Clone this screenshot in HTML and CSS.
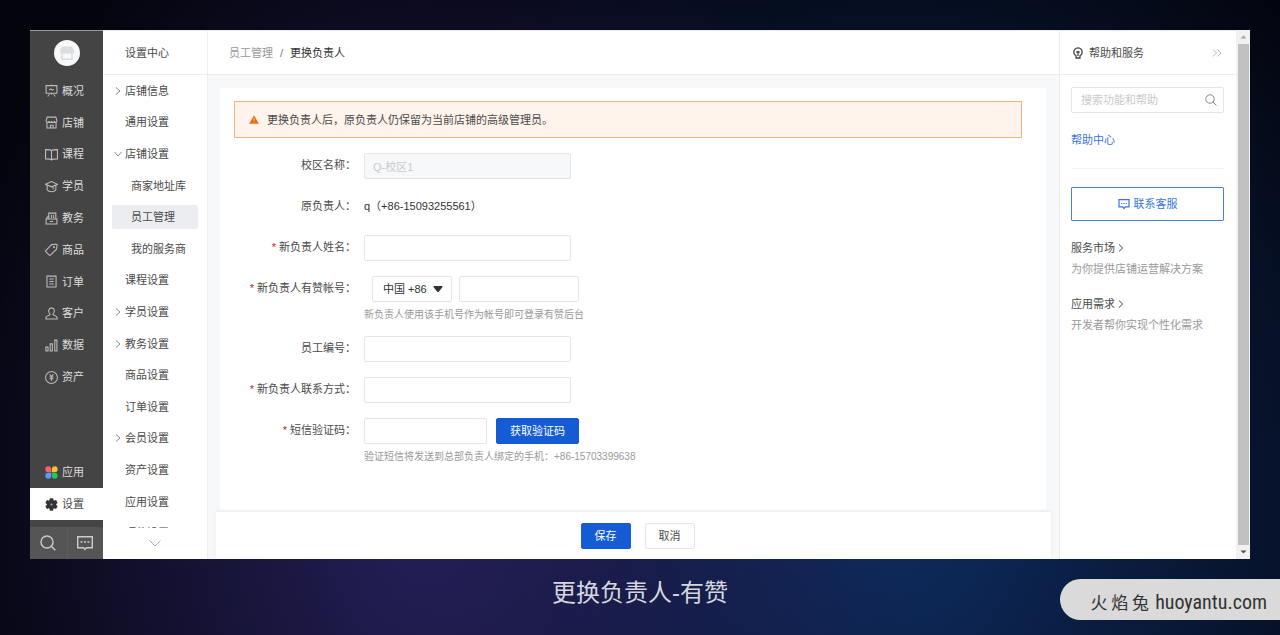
FILE: index.html
```html
<!DOCTYPE html>
<html lang="zh-CN">
<head>
<meta charset="utf-8">
<title>更换负责人-有赞</title>
<link rel="stylesheet" href="styles.css">
</head>
<body>
<div class="window">
  <nav class="rail" aria-label="主导航">
    <div class="rail-logo">
      <svg viewBox="0 0 26 26" width="26" height="26"><circle cx="13" cy="13" r="13" fill="#f7f8fa"/><path d="M7.500 6.500h11l1.500 4v1.500a2 2 0 0 1-1.200 1.600H7.200A2 2 0 0 1 6 12v-1.500z" fill="#dcdee0"/><path d="M8 13v6.200h10V13" fill="none" stroke="#dcdee0" stroke-width="1.600"/></svg>
    </div>
    <ul class="rail-list">
      <li><a href="#"><svg class="ico" viewBox="0 0 12 12"><path d="M1 1.500h10v7H1zM6 .5v1M6 8.500v1.500M4 9.500l-1.500 2M8 9.500l1.500 2M3.800 5.500l1.500-1 1.400 1.200 1.500-1"/></svg>概况</a></li>
      <li><a href="#"><svg class="ico" viewBox="0 0 12 12"><path d="M2 1h8l1 3.500c0 1.800-2.500 1.800-2.500 0 0 1.800-2.500 1.800-2.500 0 0 1.800-2.500 1.800-2.500 0 0 1.800-2.500 1.800-2.500 0zM1.800 5.800V11h8.400V5.800M5 11V8.500h2.500V11"/></svg>店铺</a></li>
      <li><a href="#"><svg class="ico" viewBox="0 0 12 12"><path d="M6 2.500C5.500 1.700 4.500 1.500.5 1.500v8.500c4 0 5 .2 5.500 1 .5-.8 1.500-1 5.500-1V1.500c-4 0-5 .2-5.500 1zM6 2.500V11"/></svg>课程</a></li>
      <li><a href="#"><svg class="ico" viewBox="0 0 12 12"><path d="M.5 4L6 1.500 11.500 4 6 6.300zM2 5v4c1.500 2.500 6.500 2.500 8 0V5M7.500 6.500v2"/></svg>学员</a></li>
      <li><a href="#"><svg class="ico" viewBox="0 0 12 12"><path d="M3.500 6.500V1H10v5.500M1 6.500l2-3M1 6.500h10V11H1zM4.500 8.800h3M6 2.500v3M8 2.500v3"/></svg>教务</a></li>
      <li><a href="#"><svg class="ico" viewBox="0 0 12 12"><path d="M.7 7L6 1.500l4.500-.3c.5 0 .8.300.7.800L10.500 6 5 11.200c-.3.300-.7.300-1 0L.7 7.900c-.3-.3-.3-.6 0-.9z"/><circle cx="8.300" cy="3.800" r=".5"/></svg>商品</a></li>
      <li><a href="#"><svg class="ico" viewBox="0 0 12 12"><path d="M1.800 1h8.400v10H1.800zM4 3.700h4M4 6h4M4 8.300h4"/></svg>订单</a></li>
      <li><a href="#"><svg class="ico" viewBox="0 0 12 12"><path d="M4.700 6.700C2.200 4.500 3.300.8 6 .8s3.800 3.700 1.300 5.900c0 1.300 3.900 1 3.900 3.300v1H.8v-1c0-2.300 3.900-2 3.900-3.300z"/></svg>客户</a></li>
      <li><a href="#"><svg class="ico" viewBox="0 0 12 12"><path d="M.8 7.500h2V11h-2zM4.800 4.500h2V11h-2zM9 1h2v10H9z"/></svg>数据</a></li>
      <li><a href="#"><svg class="ico" viewBox="0 0 12 12"><circle cx="6" cy="6" r="5.500"/><path d="M4.300 3l1.700 2.200L7.700 3M6 5.200V9M4.200 5.600h3.600M4.200 7.200h3.600"/></svg>资产</a></li>
    </ul>
    <ul class="rail-bottom">
      <li><a href="#"><svg class="ico-fill" viewBox="0 0 12 12"><path d="M5.700 5.700H3A2.700 2.700 0 1 1 5.700 3z" fill="#f4646c"/><path d="M6.300 5.700V3A2.700 2.700 0 1 1 9 5.700z" fill="#fbc02d"/><path d="M5.700 6.300V9A2.700 2.700 0 1 1 3 6.300z" fill="#5b9df5"/><path d="M6.300 6.300H9A2.700 2.700 0 1 1 6.300 9z" fill="#21c65c"/></svg>应用</a></li>
      <li class="is-active"><a href="#"><svg class="ico-fill" viewBox="0 0 12 12"><g fill="#333"><circle cx="6" cy="6" r="4.300"/><rect x="4.300" y=".3" width="3.400" height="11.400" rx=".8"/><rect x="4.300" y=".3" width="3.400" height="11.400" rx=".8" transform="rotate(60 6 6)"/><rect x="4.300" y=".3" width="3.400" height="11.400" rx=".8" transform="rotate(120 6 6)"/></g><circle cx="6" cy="6" r="1" fill="#aaa"/></svg>设置</a></li>
    </ul>
    <div class="rail-tools">
      <button type="button" aria-label="搜索"><svg viewBox="0 0 16 16" width="16" height="16"><circle cx="7" cy="7" r="6"/><path d="M11.300 11.300l4 4"/></svg></button>
      <button type="button" aria-label="消息"><svg viewBox="0 0 16 16" width="16" height="16"><path d="M.7 1.700h14.600v11H9.500L8 14.500l-1.500-1.800H.7zM3.500 7h2M7 7h2M10.500 7h2"/></svg></button>
    </div>
  </nav>

  <aside class="submenu">
    <h2 class="submenu-title">设置中心</h2>
    <div class="submenu-scroll">
      <ul>
        <li><a href="#"><svg class="chev" viewBox="0 0 6 8"><path d="M1 .5L5 4 1 7.500"/></svg>店铺信息</a></li>
        <li><a href="#">通用设置</a></li>
        <li><a href="#"><svg class="chev chev-down" viewBox="0 0 8 6"><path d="M.5 1L4 5l3.500-4"/></svg>店铺设置</a></li>
        <li class="child"><a href="#">商家地址库</a></li>
        <li class="child current"><a href="#" aria-current="page">员工管理</a></li>
        <li class="child"><a href="#">我的服务商</a></li>
        <li><a href="#">课程设置</a></li>
        <li><a href="#"><svg class="chev" viewBox="0 0 6 8"><path d="M1 .5L5 4 1 7.500"/></svg>学员设置</a></li>
        <li><a href="#"><svg class="chev" viewBox="0 0 6 8"><path d="M1 .5L5 4 1 7.500"/></svg>教务设置</a></li>
        <li><a href="#">商品设置</a></li>
        <li><a href="#">订单设置</a></li>
        <li><a href="#"><svg class="chev" viewBox="0 0 6 8"><path d="M1 .5L5 4 1 7.500"/></svg>会员设置</a></li>
        <li><a href="#">资产设置</a></li>
        <li><a href="#">应用设置</a></li>
        <li><a href="#">硬件设置</a></li>
      </ul>
    </div>
    <button class="submenu-more" type="button" aria-label="更多"><svg viewBox="0 0 12 7" width="12" height="7"><path d="M.5 .5L6 6 11.500 .5"/></svg></button>
  </aside>

  <main class="main">
    <header class="topbar"><a href="#">员工管理</a><span class="slash">/</span><span>更换负责人</span></header>
    <form class="card">
      <p class="alert"><svg viewBox="0 0 10 9" width="10" height="9"><path d="M5 .3L9.800 8.800H.2z" fill="#ed6a0c"/><path d="M5 3v2.800M5 6.800v1" stroke="#fbc9a0" stroke-width="1"/></svg>更换负责人后，原负责人仍保留为当前店铺的高级管理员。</p>
      <div class="row"><label for="campus">校区名称：</label><div class="field"><input class="box" id="campus" type="text" value="Q-校区1" disabled></div></div>
      <div class="row"><span class="label">原负责人：</span><div class="field static">q（+86-15093255561）</div></div>
      <div class="row"><label for="name"><i>*</i>新负责人姓名：</label><div class="field"><input class="box" id="name" type="text"></div></div>
      <div class="row"><label for="phone"><i>*</i>新负责人有赞帐号：</label><div class="field">
        <div class="group phone"><div class="select"><select class="box" aria-label="国家区号"><option>中国 +86</option></select><svg viewBox="0 0 10 6" width="10" height="6"><path d="M1 0h8q1 0 .5 1L6 5.500q-1 1-2 0L.5 1Q0 0 1 0z" fill="#333"/></svg></div><input class="box" id="phone" type="tel"></div>
        <p class="hint">新负责人使用该手机号作为帐号即可登录有赞后台</p></div></div>
      <div class="row"><label for="number">员工编号：</label><div class="field"><input class="box" id="number" type="text"></div></div>
      <div class="row"><label for="contact"><i>*</i>新负责人联系方式：</label><div class="field"><input class="box" id="contact" type="text"></div></div>
      <div class="row"><label for="code"><i>*</i>短信验证码：</label><div class="field">
        <div class="group"><input class="box" id="code" type="text"><button class="btn primary" type="button">获取验证码</button></div>
        <p class="hint">验证短信将发送到总部负责人绑定的手机：+86-15703399638</p></div></div>
    </form>
    <footer class="actions"><button class="btn primary" type="button">保存</button><button class="btn" type="button">取消</button></footer>
  </main>

  <aside class="help">
    <header class="help-head"><svg viewBox="0 0 12 12" width="12" height="12"><path d="M4 8.700a4.200 4.200 0 1 1 4 0v2.300H4zM6 9V4.800M4.300 5.300L6 4.500l1.700.8" stroke-width="1.300"/></svg><h2>帮助和服务</h2><button type="button" aria-label="收起"><svg viewBox="0 0 10 8" width="10" height="8"><path d="M1 .5L4.500 4 1 7.500M5.500 .5L9 4 5.500 7.500"/></svg></button></header>
    <div class="help-body">
      <div class="search"><input class="box" type="search" placeholder="搜索功能和帮助" aria-label="搜索功能和帮助"><svg viewBox="0 0 12 12" width="12" height="12"><circle cx="5" cy="5" r="4.200"/><path d="M8 8l3.500 3.500"/></svg></div>
      <a class="help-link" href="#">帮助中心</a>
      <button class="contact" type="button"><svg viewBox="0 0 12 12" width="12" height="12"><path d="M1 1.700h10v7.200H7.300L6 10.500 4.700 8.900H1zM3 5.500h1.200M5.400 5.500h1.200M7.800 5.500H9"/></svg>联系客服</button>
      <section><a href="#">服务市场<svg viewBox="0 0 6 8"><path d="M1 .5L4.700 4 1 7.500"/></svg></a><p>为你提供店铺运营解决方案</p></section>
      <section><a href="#">应用需求<svg viewBox="0 0 6 8"><path d="M1 .5L4.700 4 1 7.500"/></svg></a><p>开发者帮你实现个性化需求</p></section>
    </div>
  </aside>
  <div class="scrollbar" aria-hidden="true">
    <svg viewBox="0 0 13 13"><path d="M3.500 8l3-3 3 3z" fill="#a3a3a3"/></svg>
    <span></span>
    <svg viewBox="0 0 13 13"><path d="M3.500 5l3 3 3-3z" fill="#505050"/></svg>
  </div>
</div>
<h1 class="caption">更换负责人-有赞</h1>
<div class="mark"><span class="mark-cn">火 焰 兔</span><span>huoyantu.com</span></div>
</body>
</html>
```

FILE: styles.css
```css
* { box-sizing: border-box; }
body {
  margin: 0;
  min-height: 100vh;
  padding: 30px 30px 0;
  display: flex;
  flex-direction: column;
  font: 11px/16px "Liberation Sans", "Noto Sans CJK SC", sans-serif;
  color: #4a4a4a;
  background:
    radial-gradient(ellipse 500px 680px at 33% 80%, #251f58 0%, rgba(37, 31, 88, 0) 100%),
    radial-gradient(ellipse 600px 680px at 70% 80%, #0e2c60 0%, rgba(14, 44, 96, 0) 100%),
    #03040c;
}
ul { list-style: none; margin: 0; padding: 0; }
h1, h2, p { margin: 0; font-size: inherit; font-weight: 400; }
a { color: inherit; text-decoration: none; }
button, input, select { font: inherit; color: inherit; }
button { border: 0; background: none; padding: 0; }
svg { flex: none; }

.window { flex: 1; display: flex; background: #fff; overflow: hidden; }

.rail {
  flex: 0 0 73px;
  display: flex;
  flex-direction: column;
  background: #444;
  color: #ddd;
  border-top: 1px solid #999;
}
.rail-logo { height: 44px; display: flex; align-items: center; justify-content: center; }
.rail-list { height: 318px; display: flex; flex-direction: column; }
.rail-list li { flex: 1; display: flex; }
.rail-bottom { margin-top: auto; padding-bottom: 7px; }
.rail-bottom li { height: 32px; display: flex; }
.rail a { flex: 1; display: flex; align-items: center; gap: 4px; padding-left: 15px; }
.rail .is-active { background: #fff; color: #4a4a4a; }
.ico, .ico-fill { width: 13px; height: 13px; }
.ico { fill: none; stroke: #bbb; stroke-width: 1; }
.rail-tools { height: 32px; display: flex; background: #555; }
.rail-tools button { flex: 1; display: flex; align-items: center; justify-content: center; }
.rail-tools button + button { box-shadow: inset 1px 0 #5c5c5c; }
.rail-tools svg { fill: none; stroke: #ccc; stroke-width: 1.4; }

.submenu {
  flex: 0 0 105px;
  display: flex;
  flex-direction: column;
  border-top: 1px solid #e8e8e8;
  border-right: 1px solid #ebedf0;
}
.submenu-title { height: 44px; line-height: 44px; padding-left: 22px; border-bottom: 1px solid #ebedf0; }
.submenu-scroll { flex: 1 1 0; min-height: 0; overflow: hidden; }
.submenu ul { height: 474px; display: flex; flex-direction: column; }
.submenu li { flex: 1; display: flex; align-items: center; padding: 0 9px; }
.submenu li a { flex: 1; position: relative; line-height: 24px; padding-left: 13px; }
.submenu .child a { padding-left: 19px; }
.submenu .current a { background: #ebedf0; border-radius: 2px; }
.chev { position: absolute; left: 3px; top: 8px; width: 6px; height: 8px; fill: none; stroke: #888; }
.chev-down { left: 2px; top: 9px; width: 8px; height: 6px; }
.submenu-more { height: 31px; display: flex; align-items: center; justify-content: center; }
.submenu-more svg { fill: none; stroke: #aaa; }

.main { flex: 1; min-width: 0; display: flex; flex-direction: column; background: #f7f8fa; }
.topbar {
  height: 45px;
  padding: 0 21px;
  display: flex;
  align-items: center;
  gap: 7px;
  background: #fff;
  border-top: 1px solid #e8e8e8;
  border-bottom: 1px solid #ebedf0;
  color: #333;
}
.topbar a { color: #999; }
.slash { color: #777; }
.card { flex: 1; margin: 13px 13px 0 12px; padding: 13px 24px 0 14px; background: #fff; }
.alert {
  height: 37px;
  margin-bottom: 15px;
  padding-left: 14px;
  display: flex;
  align-items: center;
  gap: 8px;
  border: 1px solid #f9b27d;
  background: #fff4eb;
}
.row { display: flex; gap: 8px; margin-bottom: 15px; }
.row label, .label { flex: 0 0 122px; text-align: right; line-height: 24px; }
.row i { color: #c0282d; font-style: normal; margin-right: 3px; }
.field { flex: 1; min-height: 26px; }
.static { line-height: 24px; color: #333; }
.box {
  display: block;
  width: 207px;
  height: 26px;
  padding: 0 8px;
  border: 1px solid #e5e6e9;
  border-radius: 2px;
  background: #fff;
}
.box:disabled { background: #f7f8fa; color: #c8c9cc; }
.group { display: flex; gap: 9px; }
.group .box { width: 123px; }
.phone { padding-left: 8px; gap: 7px; }
.phone .box { width: 120px; }
.select { position: relative; }
.phone .select .box { appearance: none; width: 80px; padding: 0 10px; color: #333; }
.select svg { position: absolute; right: 9px; top: 10px; pointer-events: none; }
.hint { font-size: 10px; line-height: 19px; padding-top: 3px; margin-bottom: -3px; color: #999; }
.btn {
  height: 26px;
  padding: 0 13px;
  border: 1px solid #e5e6e9;
  border-radius: 2px;
  background: #fff;
}
.primary { border-color: #155bd4; background: #155bd4; color: #fff; }
.actions {
  height: 47px;
  margin: 2px 8px 0;
  padding-left: 8px;
  display: flex;
  align-items: center;
  justify-content: center;
  gap: 14px;
  background: #fff;
  box-shadow: 0 -1px 3px #ebebed;
}

.help { flex: 0 0 178px; border-left: 1px solid #ebedf0; border-right: 1px solid #f0f0f0; border-top: 1px solid #e8e8e8; }
.help-head { height: 44px; padding: 0 14px 0 12px; display: flex; align-items: center; gap: 5px; border-bottom: 1px solid #ebedf0; }
.help-head h2 { flex: 1; }
.help svg { fill: none; stroke: #444; }
.help-head button { display: flex; }
.help-head button svg { stroke: #bbb; }
.help-body { padding: 12px 12px 0 11px; display: flex; flex-direction: column; }
.search { position: relative; }
.search .box { width: 100%; padding: 0 9px; }
.search input::placeholder { color: #c8c9cc; }
.search svg { position: absolute; right: 7px; top: 7px; stroke: #888; }
.help-link { padding: 19px 0 20px; color: #3a75dc; border-bottom: 1px solid #f2f3f5; margin-bottom: 18px; }
.contact {
  height: 34px;
  margin-bottom: 19px;
  display: flex;
  align-items: center;
  justify-content: center;
  gap: 4px;
  border: 1px solid #4a80de;
  border-radius: 1px;
  color: #3a75dc;
}
.contact svg { stroke: #3a75dc; stroke-width: 1.2; }
.help section { margin-bottom: 19px; }
.help section a { display: flex; align-items: center; gap: 3px; }
.help section svg { width: 6px; height: 8px; }
.help section p { padding-top: 5px; color: #999; }

.scrollbar { flex: 0 0 13px; display: flex; flex-direction: column; background: #f1f1f1; }
.scrollbar svg { width: 13px; height: 14px; }
.scrollbar span { flex: 1; margin: 0 1px; background: #c1c1c1; }

.caption { height: 76px; padding-top: 16px; font-size: 24px; line-height: 36px; text-align: center; color: #d5d6de; }
.mark {
  position: absolute;
  right: 0;
  bottom: 15px;
  height: 41px;
  padding: 4px 13px 0 31px;
  display: flex;
  align-items: center;
  gap: 6px;
  border-radius: 21px 0 0 21px;
  background: #dadada;
  color: #333;
  font: 20px/32px "Roboto Condensed", "Liberation Sans", sans-serif;
}
.mark-cn { font-family: "Noto Sans CJK SC", sans-serif; font-size: 17px; }
```
